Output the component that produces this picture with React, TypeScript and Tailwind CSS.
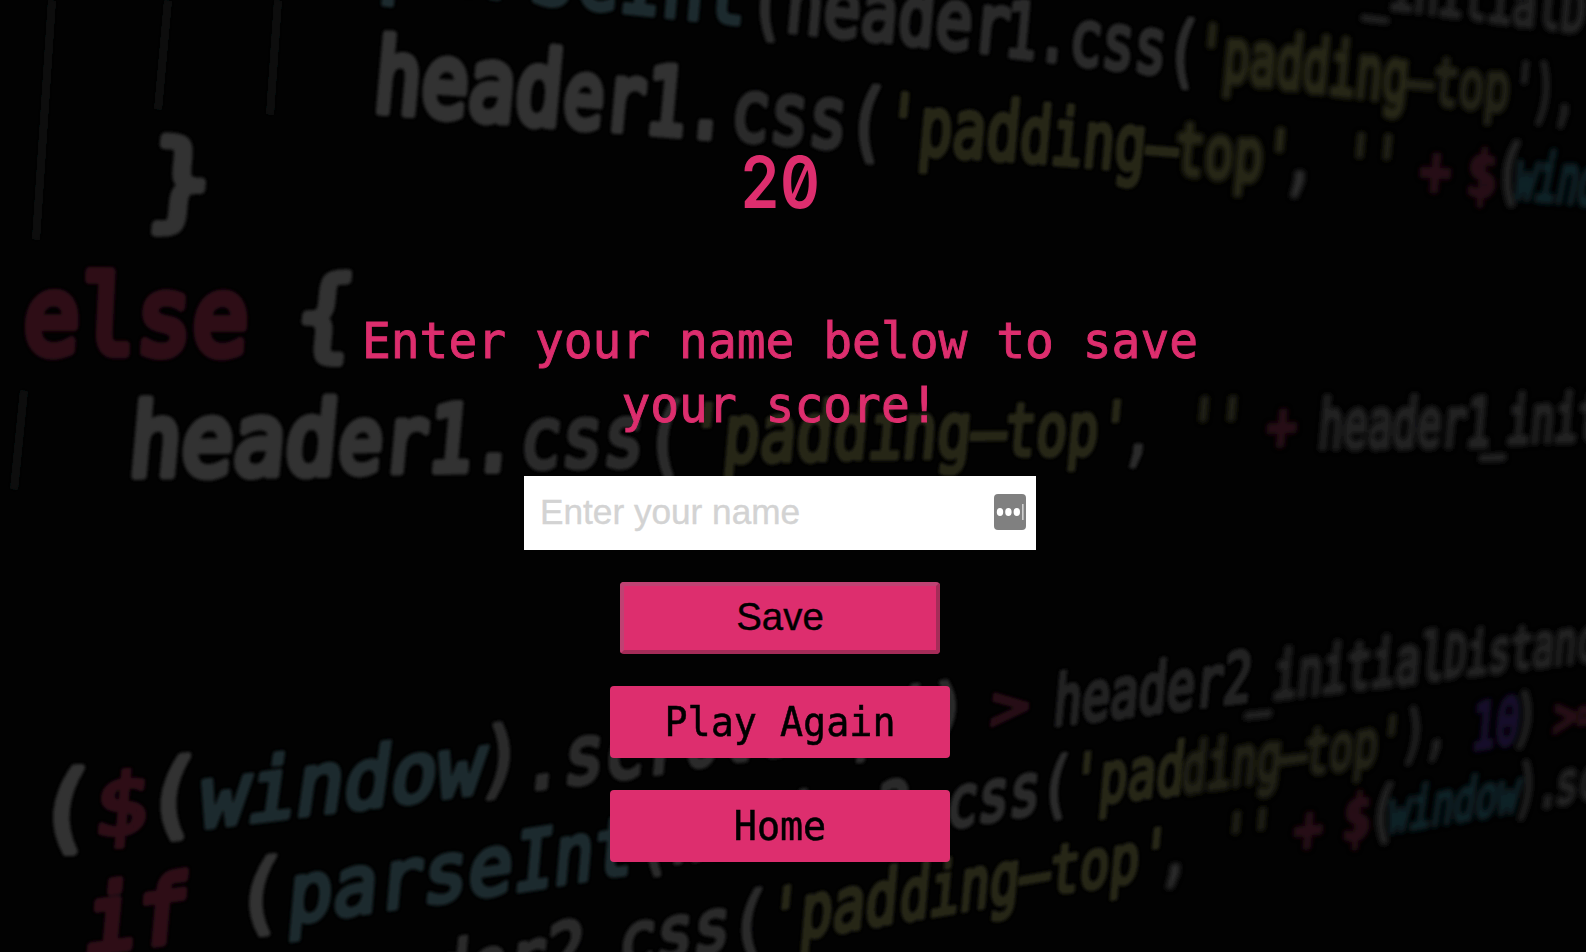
import React, { useState } from "react";

// text, x start, x end, baseline start, baseline end, em size, colour, lean
type Run = [string, number, number, number, number, number, string, number?];

const W = "#313131";
const M = "#2b2b2c";
const D = "#232324";
const Y = "#262615";
const Y2 = "#212113";
const R = "#2d0d17";
const R2 = "#280a12";
const B = "#1b2a2f";
const B2 = "#0f2028";

const runs: Run[] = [
  ["pars", 378, 575, -14, 8, 95, B],
  ["eInt", 575, 745, 8, 26, 93, B],
  ["(header", 747, 1008, 28, 56, 88, M],
  ["1.css(", 1003, 1197, 57, 80, 82, M],
  ["'padding", 1195, 1407, 78, 104, 78, Y],
  ["–top", 1406, 1508, 103, 112, 70, Y2],
  ["'),", 1511, 1574, 112, 119, 72, D],
  ["_initialD", 1364, 1584, 6, 34, 64, D],

  ["head", 372, 560, 112, 127, 108, W],
  ["er1.", 561, 725, 127, 140, 99, W],
  ["css(", 729, 884, 140, 153, 91, M],
  ["'pad", 883, 1018, 153, 162, 87, Y],
  ["ding–", 1018, 1176, 162, 175, 83, Y],
  ["top'", 1173, 1291, 175, 185, 77, Y],
  [",", 1284, 1313, 185, 187, 80, M],
  ["''", 1343, 1397, 190, 193, 80, Y2],
  ["+", 1418, 1449, 194, 196, 72, R2],
  ["$", 1465, 1495, 196, 198, 66, R2],
  ["(", 1493, 1522, 195, 197, 75, D],
  ["wind", 1512, 1596, 199, 206, 70, B2, 0.2],

  ["}", 146, 209, 217, 219, 111, W, 0.1],
  ["else", 22, 247, 355, 356, 115, R, 0.05],
  ["{", 293, 351, 349, 349, 104, W, 0.1],

  ["head", 127, 335, 477, 475, 107, W],
  ["er1.", 336, 515, 474, 471, 98, W],
  ["css(", 518, 684, 469, 466, 91, M],
  ["'pad", 685, 831, 464, 461, 86, Y],
  ["ding–", 832, 1004, 460, 458, 82, Y],
  ["top'", 1003, 1128, 457, 455, 78, Y],
  [",", 1122, 1152, 458, 457, 76, M],
  ["''", 1186, 1242, 454, 453, 79, Y2],
  ["+", 1265, 1295, 450, 449, 70, R2],
  ["header1", 1317, 1489, 449, 447, 72, D],
  ["_init", 1482, 1600, 445, 441, 70, D],

  ["(", 36, 90, 843, 840, 101, W],
  ["$", 92, 147, 838, 833, 90, R],
  ["(", 144, 196, 831, 825, 98, W],
  ["win", 197, 341, 830, 812, 93, B, 0.14],
  ["dow", 341, 481, 812, 794, 90, B, 0.14],
  [")", 477, 520, 790, 785, 89, M],
  [".scr", 521, 684, 792, 771, 87, M],
  ["ollTop", 684, 888, 769, 743, 80, M],
  ["()", 884, 966, 741, 731, 73, M],
  [">", 989, 1028, 731, 727, 68, R2],
  ["header2", 1052, 1250, 727, 702, 75, D],
  ["_initial", 1247, 1443, 703, 680, 70, D],
  ["Distance", 1443, 1619, 679, 658, 64, D],

  ["if", 83, 186, 955, 941, 98, R],
  ["(", 232, 283, 928, 922, 94, W],
  ["parse", 286, 511, 925, 893, 89, B],
  ["Int", 512, 632, 893, 874, 88, B],
  ["(header2.", 636, 942, 869, 830, 80, M],
  ["css(", 945, 1070, 830, 808, 77, M],
  ["'pad", 1069, 1183, 808, 794, 76, Y],
  ["ding–", 1180, 1305, 794, 777, 72, Y2],
  ["top'", 1303, 1401, 776, 762, 68, Y2],
  ["),", 1401, 1447, 757, 750, 66, D],
  ["10", 1470, 1518, 751, 743, 68, "#17102b"],
  [")", 1512, 1536, 741, 738, 66, D],
  [">=", 1552, 1600, 738, 732, 60, R2],

  ["ader2.", 390, 620, 1010, 970, 84, M],
  ["css(", 617, 766, 968, 944, 79, M],
  ["'pad", 766, 896, 946, 923, 81, Y],
  ["ding–", 898, 1048, 923, 897, 78, Y],
  ["top'", 1048, 1168, 896, 877, 73, Y],
  [",", 1160, 1188, 879, 876, 72, M],
  ["''", 1220, 1271, 865, 858, 72, Y2],
  ["+", 1292, 1321, 853, 850, 68, R2],
  ["$", 1341, 1369, 842, 838, 66, R2],
  ["(", 1367, 1395, 837, 833, 70, D],
  ["window", 1386, 1517, 834, 812, 62, B2, 0.15],
  [").", 1514, 1558, 812, 806, 68, D],
  ["sc", 1554, 1600, 806, 798, 62, D],
];

const CELL = 60.2;

function CodeBackdrop() {
  return (
    <svg
      aria-hidden="true"
      className="absolute inset-0 h-full w-full select-none"
      viewBox="0 0 1586 952"
      preserveAspectRatio="none"
    >
      <defs>
        <filter id="near" x="0" y="0" width="1586" height="952" filterUnits="userSpaceOnUse">
          <feGaussianBlur stdDeviation="1.8" />
        </filter>
        <filter id="far" x="0" y="0" width="1586" height="952" filterUnits="userSpaceOnUse">
          <feGaussianBlur stdDeviation="2.5" />
        </filter>
      </defs>
      <g filter="url(#far)" stroke="#070808" strokeWidth="9" fill="none">
        <path d="M52 0 L36 240" />
        <path d="M168 0 L158 110" />
        <path d="M278 0 L270 115" />
        <path d="M24 390 L14 490" />
      </g>
      {[false, true].map((far) => (
        <g key={String(far)} filter={far ? "url(#far)" : "url(#near)"}>
          {runs
            .filter((r) => r[1] >= 1150 === far)
            .map(([t, x0, x1, y0, y1, em, color, lean = 0.09], i) => {
              const w = t.length * CELL;
              const a = (x1 - x0) / w;
              const b = (y1 - y0) / w;
              const d = (em * 0.93) / 100;
              const lift = em * 0.015;
              return (
                <text
                  key={i}
                  transform={`matrix(${a} ${b} ${-lean * d} ${d} ${x0} ${y0 - lift})`}
                  fontSize="100"
                  fontFamily="'DejaVu Sans Mono', monospace"
                  fill={color}
                  stroke={color}
                  strokeWidth={em > 95 || far ? 9 : 6.5}
                  strokeLinejoin="round"
                  xmlSpace="preserve"
                >
                  {t}
                </text>
              );
            })}
        </g>
      ))}
    </svg>
  );
}

function AutofillBadge() {
  return (
    <svg width="32" height="36" viewBox="0 0 32 36" className="absolute top-[18px] right-[10px]">
      <rect width="32" height="36" rx="4" fill="#808080" />
      <ellipse cx="6" cy="18" rx="3.2" ry="4" fill="#fff" />
      <ellipse cx="14.4" cy="18" rx="3.2" ry="4" fill="#fff" />
      <ellipse cx="22.8" cy="18" rx="3.2" ry="4" fill="#fff" />
      <rect x="28.2" y="10" width="1.3" height="16" fill="#e4e4e4" />
    </svg>
  );
}

export default function App() {
  const [name, setName] = useState("");

  return (
    <div className="relative h-[952px] w-full overflow-hidden bg-[#020202]">
      <CodeBackdrop />
      <main className="relative flex w-[1560px] flex-col items-center pt-[139px] font-['DejaVu_Sans_Mono',monospace]">
        <h1 className="h-[86px] origin-center scale-x-[0.87] font-['Inter',sans-serif] text-[71px] leading-[86px] font-semibold text-[#dd2e6e] [font-feature-settings:'zero','tnum']">
          20
        </h1>
        <h2 className="mt-[87px] w-[860px] origin-center scale-y-[1.05] text-center text-[47.9px] leading-[61px] text-[#dd2e6e] [-webkit-text-stroke:0.9px_#dd2e6e]">
          Enter your name below to save your score!
        </h2>
        <form
          className="mt-[42px] flex flex-col items-center"
          onSubmit={(e) => e.preventDefault()}
        >
          <div className="relative h-[74px] w-[512px]">
            <input
              value={name}
              onChange={(e) => setName(e.target.value)}
              placeholder="Enter your name"
              className="block h-full w-full bg-white px-4 pb-[2px] font-['Liberation_Sans',Arial,sans-serif] text-[35.2px] text-black outline-none placeholder:text-[#d3d3d3] [-webkit-text-stroke:0.4px]"
            />
            <AutofillBadge />
          </div>
          <button
            type="submit"
            className="mt-8 h-[72px] w-80 rounded-[4px] border-4 border-t-[#bf4273] border-r-[#a42c58] border-b-[#a42c58] border-l-[#bf4273] bg-[#dd2e6e] pb-[2px] font-['Liberation_Sans',Arial,sans-serif] text-[38.4px] leading-none text-black [-webkit-text-stroke:0.4px]"
          >
            Save
          </button>
        </form>
        <nav className="mt-8 flex flex-col gap-8">
          <a className="flex h-[72px] w-[340px] items-center justify-center rounded-[4px] bg-[#dd2e6e] text-[38.4px] leading-none text-black [-webkit-text-stroke:0.5px]">
            <span className="scale-y-[1.05]">Play Again</span>
          </a>
          <a className="flex h-[72px] w-[340px] items-center justify-center rounded-[4px] bg-[#dd2e6e] text-[38.4px] leading-none text-black [-webkit-text-stroke:0.5px]">
            <span className="scale-y-[1.05]">Home</span>
          </a>
        </nav>
      </main>
    </div>
  );
}
